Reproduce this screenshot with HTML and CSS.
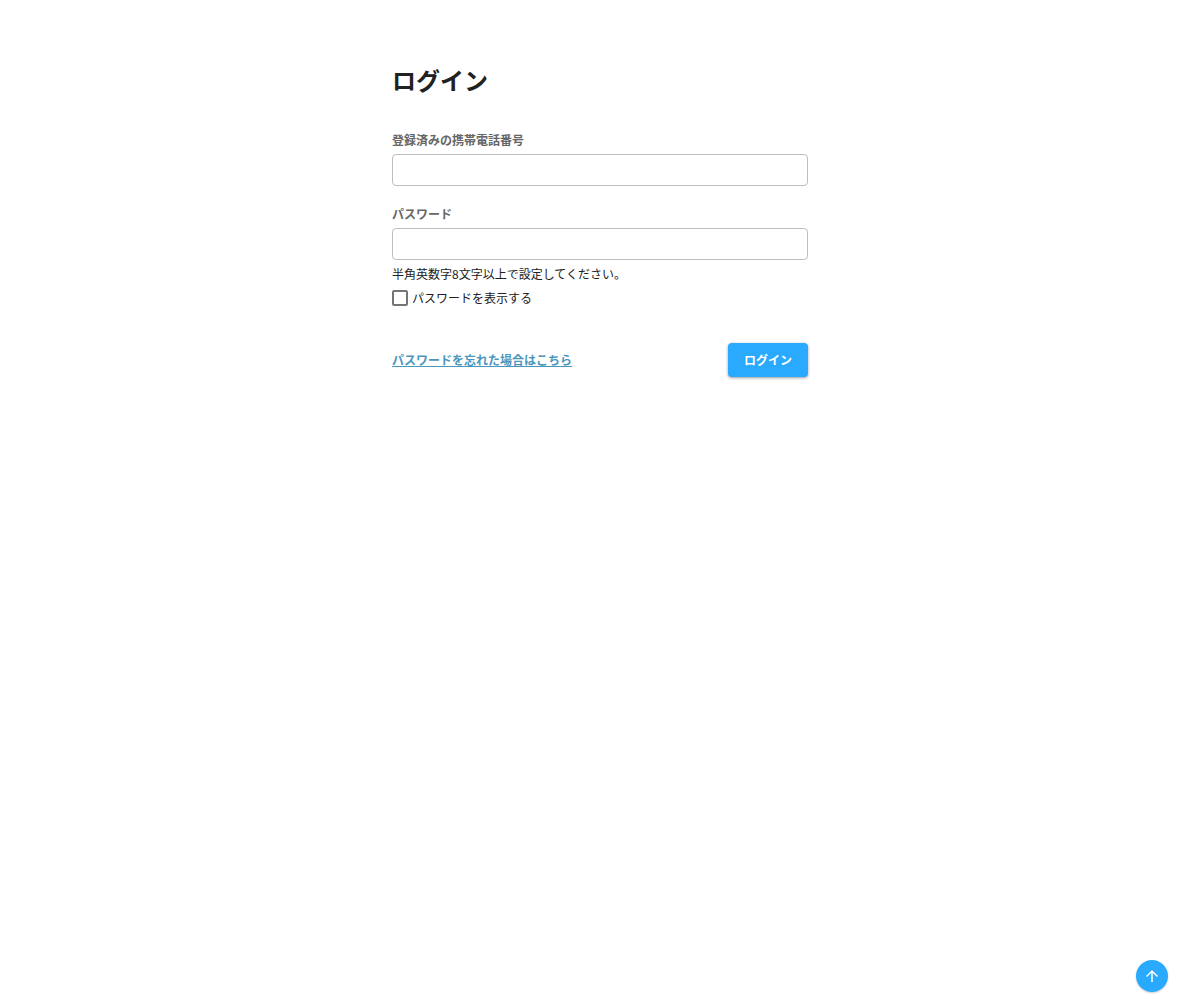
FILE: index.html
```html
<!DOCTYPE html>
<html lang="ja">
<head>
    <meta charset="UTF-8">
    <meta name="viewport" content="width=device-width, initial-scale=1.0">
    <title>ログイン</title>
    <link rel="stylesheet" href="styles.css">
</head>
<body>
    <main class="container">
        <h1>ログイン</h1>
        <form id="loginForm">
            <div class="field">
                <label for="phone">登録済みの携帯電話番号</label>
                <input type="tel" id="phone" autocomplete="tel">
            </div>
            <div class="field">
                <label for="password">パスワード</label>
                <input type="password" id="password" aria-describedby="passwordHelp">
                <p class="help" id="passwordHelp">半角英数字8文字以上で設定してください。</p>
                <div class="show-password">
                    <input type="checkbox" id="showPassword">
                    <label for="showPassword">パスワードを表示する</label>
                </div>
            </div>
            <div class="actions">
                <a href="#">パスワードを忘れた場合はこちら</a>
                <button type="submit" class="login-button">ログイン</button>
            </div>
        </form>
    </main>

    <button type="button" class="page-top" id="pageTop" aria-label="ページの先頭へ">
        <svg width="18" height="18" viewBox="0 0 24 24" fill="currentColor" aria-hidden="true">
            <path d="M4 12l1.41 1.41L11 7.83V20h2V7.83l5.58 5.59L20 12l-8-8-8 8z"/>
        </svg>
    </button>

    <script>
        const password = document.getElementById('password');
        const showPassword = document.getElementById('showPassword');

        showPassword.addEventListener('change', () => {
            password.type = showPassword.checked ? 'text' : 'password';
        });

        document.getElementById('loginForm').addEventListener('submit', (event) => {
            event.preventDefault();
        });

        document.getElementById('pageTop').addEventListener('click', () => {
            window.scrollTo({ top: 0, behavior: 'smooth' });
        });
    </script>
</body>
</html>
```

FILE: styles.css
```css
* {
    box-sizing: border-box;
}
body {
    margin: 0;
    background-color: #fff;
    color: #212121;
    font-family: "Noto Sans CJK JP", sans-serif;
    font-size: 12px;
    line-height: 20px;
}
.container {
    max-width: 448px;
    margin: 0 auto;
    padding: 64px 16px;
}
h1 {
    margin: 0 0 34px;
    font-size: 24px;
    line-height: 32px;
}
.field {
    display: flex;
    flex-direction: column;
    gap: 4px;
    margin-bottom: 18px;
}
.field > label {
    color: #666;
    font-weight: bold;
}
.field > input {
    width: 100%;
    height: 32px;
    padding: 4px 8px;
    border: 1px solid #bdbdbd;
    border-radius: 4px;
    background-color: #fff;
    font: inherit;
}
.help {
    margin: 0;
}
.show-password {
    display: flex;
    align-items: center;
    gap: 4px;
}
.show-password input {
    appearance: none;
    width: 16px;
    height: 16px;
    margin: 0;
    border: 2px solid #757575;
    border-radius: 2px;
}
.show-password input:checked {
    background-color: #29aaff;
    border-color: #29aaff;
}
.actions {
    display: flex;
    align-items: center;
    justify-content: space-between;
    margin-top: 35px;
}
.actions a {
    color: #4b96bd;
    font-weight: bold;
}
button {
    border: none;
    background-color: #29aaff;
    color: #fff;
    cursor: pointer;
}
button:hover {
    background-color: #1894e6;
}
.login-button {
    padding: 7px 16px;
    border-radius: 4px;
    box-shadow: 0 1px 3px rgba(0, 0, 0, 0.4);
    font: inherit;
    font-weight: bold;
}
.page-top {
    display: flex;
    align-items: center;
    justify-content: center;
    position: fixed;
    right: 32px;
    bottom: 8px;
    width: 32px;
    height: 32px;
    padding: 0;
    border-radius: 50%;
    box-shadow: 0 1px 2px rgba(0, 0, 0, 0.2);
}
```
